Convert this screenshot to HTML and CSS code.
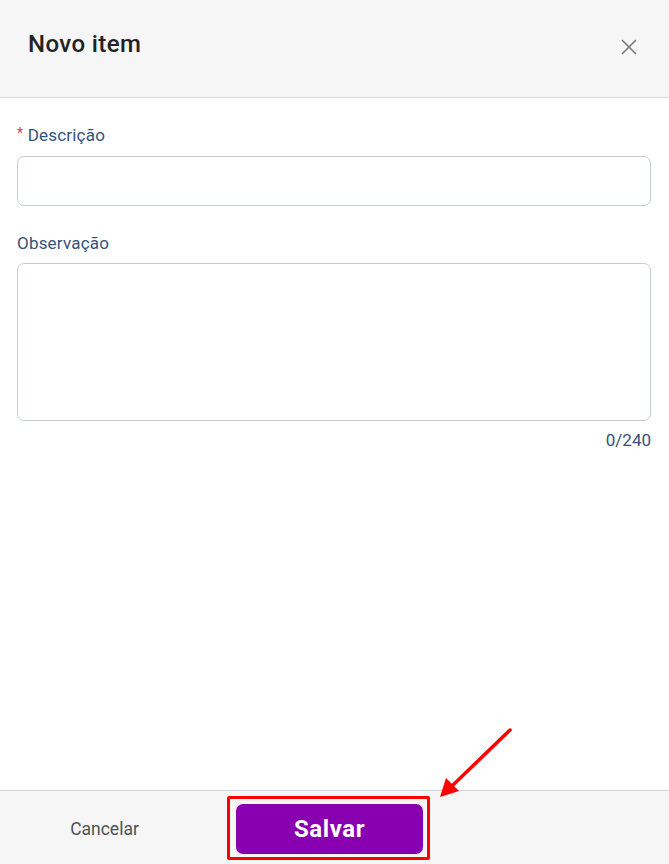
FILE: index.html
```html
<!DOCTYPE html>
<html lang="pt-BR">
<head>
  <meta charset="UTF-8" />
  <meta name="viewport" content="width=device-width, initial-scale=1" />
  <title>Novo item</title>
  <link rel="stylesheet" href="styles.css">
</head>
<body>

  <div class="modal">
    <header class="modal-header">
      <h1>Novo item</h1>
      <button class="close" aria-label="Fechar">
        <svg width="16" height="16" viewBox="0 0 16 16">
          <path d="M1 1 L15 15 M15 1 L1 15" stroke="#7a7a7a" stroke-width="1.6" fill="none" />
        </svg>
      </button>
    </header>

    <main class="modal-body">
      <div class="field">
        <label for="descricao"><span class="req">*</span> Descrição</label>
        <input id="descricao" type="text" />
      </div>

      <div class="field field-obs">
        <label for="observacao">Observação</label>
        <textarea id="observacao" maxlength="240"></textarea>
        <div class="counter">0/240</div>
      </div>
    </main>

    <footer class="modal-footer">
      <button class="btn-cancel">Cancelar</button>
      <div class="save-wrap">
        <button class="btn-save">Salvar</button>
        <span class="highlight"></span>
      </div>
    </footer>
  </div>

  <!-- annotation arrow -->
  <svg class="arrow" width="669" height="864" viewBox="0 0 669 864">
    <line x1="510" y1="730" x2="452" y2="786" stroke="#ff0000" stroke-width="3.5" stroke-linecap="round" />
    <polygon points="440,797 446,778 459,791" fill="#ff0000" />
  </svg>

</body>
</html>
```

FILE: styles.css
```css
* {
  margin: 0;
  padding: 0;
  box-sizing: border-box;
  font-family: 'Roboto', 'Liberation Sans', sans-serif;
}

body {
  background: #fff;
  width: 669px;
  height: 864px;
  overflow: hidden;
  position: relative;
}

.modal {
  display: flex;
  flex-direction: column;
  height: 100%;
}

.modal-header {
  height: 98px;
  background: #f6f6f6;
  border-bottom: 1px solid #dcdcdc;
  display: flex;
  justify-content: space-between;
  align-items: flex-start;
  padding: 29px 32px 0 28px;
}

.modal-header h1 {
  font-size: 24px;
  font-weight: 500;
  color: #222;
  line-height: 30px;
  letter-spacing: 0.4px;
}

.close {
  background: none;
  border: none;
  width: 16px;
  height: 16px;
  margin-top: 10px;
  cursor: pointer;
}

.modal-body {
  flex: 1;
  padding: 24px 18px 0 17px;
}

.field label {
  display: block;
  font-size: 17px;
  line-height: 22px;
  color: #35527a;
  margin-bottom: 10px;
  letter-spacing: 0.2px;
}

.req {
  color: #e53935;
  font-size: 14px;
  vertical-align: 3px;
}

.field input,
.field textarea {
  display: block;
  width: 100%;
  border: 1px solid #c8cdd4;
  border-radius: 7px;
  background: #fff;
  font-size: 16px;
  padding: 8px 12px;
  outline: none;
}

.field input {
  height: 50px;
}

.field-obs {
  margin-top: 26px;
}

.field-obs label {
  margin-bottom: 9px;
}

.field textarea {
  height: 158px;
  resize: none;
}

.counter {
  text-align: right;
  font-size: 17px;
  line-height: 22px;
  color: #35527a;
  margin-top: 8px;
}

.modal-footer {
  height: 74px;
  background: #f6f6f6;
  border-top: 1px solid #cfd5dc;
  display: flex;
  align-items: flex-start;
  padding: 13px 0 0 17px;
  gap: 44px;
}

.btn-cancel {
  width: 175px;
  height: 50px;
  background: none;
  border: none;
  font-size: 17.5px;
  color: #4d5257;
  cursor: pointer;
}

.save-wrap {
  position: relative;
}

.btn-save {
  display: block;
  width: 187px;
  height: 50px;
  border: none;
  border-radius: 7px;
  background: #8800b0;
  color: #fff;
  font-size: 24px;
  font-weight: 700;
  letter-spacing: 0.6px;
  cursor: pointer;
}

.highlight {
  position: absolute;
  left: -9px;
  top: -8px;
  right: -7px;
  bottom: -6px;
  border: 3px solid #ff0000;
  border-radius: 2px;
  pointer-events: none;
}

.arrow {
  position: absolute;
  left: 0;
  top: 0;
  pointer-events: none;
}
```
